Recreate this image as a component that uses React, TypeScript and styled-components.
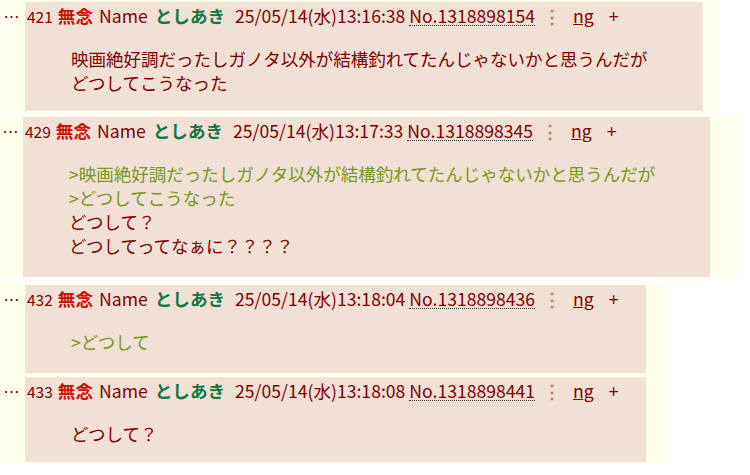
import React from "react";
import styled, { createGlobalStyle } from "styled-components";

const GlobalStyle = createGlobalStyle`
  html, body {
    margin: 0;
    padding: 0;
    background: #ffffff;
  }
  body {
    font-family: "Noto Sans CJK JP", "Noto Sans", sans-serif;
    color: #800000;
  }
`;

interface ReplyData {
  no: number;
  date: string;
  postNo: string;
  lines: string[];
  cellWidth: number;
  dotsWidth: number;
  tailWidth: number;
  gapAfter: number;
  padBottom: number;
}

const replies: ReplyData[] = [
  {
    no: 421,
    date: "25/05/14(水)13:16:38",
    postNo: "No.1318898154",
    lines: ["映画絶好調だったしガノタ以外が結構釣れてたんじゃないかと思うんだが", "どつしてこうなった"],
    cellWidth: 678,
    dotsWidth: 25,
    tailWidth: 16,
    gapAfter: 2,
    padBottom: 16,
  },
  {
    no: 429,
    date: "25/05/14(水)13:17:33",
    postNo: "No.1318898345",
    lines: [">映画絶好調だったしガノタ以外が結構釣れてたんじゃないかと思うんだが", ">どつしてこうなった", "どつして？", "どつしてってなぁに？？？？"],
    cellWidth: 687,
    dotsWidth: 23,
    tailWidth: 28,
    gapAfter: 4,
    padBottom: 19,
  },
  {
    no: 432,
    date: "25/05/14(水)13:18:04",
    postNo: "No.1318898436",
    lines: [">どつして"],
    cellWidth: 621,
    dotsWidth: 25,
    tailWidth: 19,
    gapAfter: 0,
    padBottom: 19,
  },
  {
    no: 433,
    date: "25/05/14(水)13:18:08",
    postNo: "No.1318898441",
    lines: ["どつして？"],
    cellWidth: 621,
    dotsWidth: 25,
    tailWidth: 19,
    gapAfter: 0,
    padBottom: 16,
  },
];

const Thread = styled.div`
  display: flex;
  flex-direction: column;
  align-items: flex-start;
`;

const ReplyTable = styled.div<{ $tail: number; $gap: number }>`
  display: flex;
  align-items: stretch;
  background: #ffffee;
  padding: 2px ${(p) => p.$tail}px 2px 0;
  margin-bottom: ${(p) => p.$gap}px;
`;

const DotsCell = styled.div<{ $w: number }>`
  width: ${(p) => p.$w}px;
  flex-shrink: 0;
  font-size: 16px;
  line-height: 28px;
  color: #800000;
  text-align: center;
  padding-right: 2px;
  box-sizing: border-box;
`;

const ReplyCell = styled.div<{ $w: number; $pb: number }>`
  width: ${(p) => p.$w}px;
  box-sizing: border-box;
  background: #f0e0d6;
  padding: 0 2px ${(p) => p.$pb}px 2px;
`;

const Header = styled.div`
  display: flex;
  align-items: baseline;
  white-space: nowrap;
  font-size: 17.6px;
  line-height: 28px;
  color: #800000;
`;

const ResNo = styled.span`
  font-size: 15.5px;
  margin-right: 5px;
`;

const Subject = styled.span`
  color: #cc1105;
  font-weight: bold;
  margin-right: 6px;
`;

const NameLabel = styled.span`
  margin-right: 7px;
`;

const Poster = styled.span`
  color: #117743;
  font-weight: bold;
  margin-right: 10px;
`;

const DateText = styled.span`
  margin-right: 4px;
`;

const PostNo = styled.span`
  border-bottom: 1px dotted #333;
  line-height: 19px;
`;

const Menu = styled.span`
  color: #b08585;
  font-weight: bold;
  margin: 0 12px 0 8px;
`;

const NgLink = styled.span`
  text-decoration: underline;
  margin-right: 15px;
`;

const Plus = styled.span``;

const Quote = styled.div`
  margin: 17px 0 0 44px;
  font-size: 17.5px;
  line-height: 24px;
  white-space: nowrap;
`;

const Line = styled.div<{ $quoted: boolean }>`
  color: ${(p) => (p.$quoted ? "#789922" : "#800000")};
`;

const Reply: React.FC<{ data: ReplyData }> = ({ data }) => (
  <ReplyTable $tail={data.tailWidth} $gap={data.gapAfter}>
    <DotsCell $w={data.dotsWidth}>…</DotsCell>
    <ReplyCell $w={data.cellWidth} $pb={data.padBottom}>
      <Header>
        <ResNo>{data.no}</ResNo>
        <Subject>無念</Subject>
        <NameLabel>Name</NameLabel>
        <Poster>としあき</Poster>
        <DateText>{data.date}</DateText>
        <PostNo>{data.postNo}</PostNo>
        <Menu>⋮</Menu>
        <NgLink>ng</NgLink>
        <Plus>+</Plus>
      </Header>
      <Quote>
        {data.lines.map((line, i) => (
          <Line key={i} $quoted={line.startsWith(">")}>
            {line}
          </Line>
        ))}
      </Quote>
    </ReplyCell>
  </ReplyTable>
);

export default function App() {
  return (
    <>
      <GlobalStyle />
      <Thread>
        {replies.map((r) => (
          <Reply key={r.no} data={r} />
        ))}
      </Thread>
    </>
  );
}
